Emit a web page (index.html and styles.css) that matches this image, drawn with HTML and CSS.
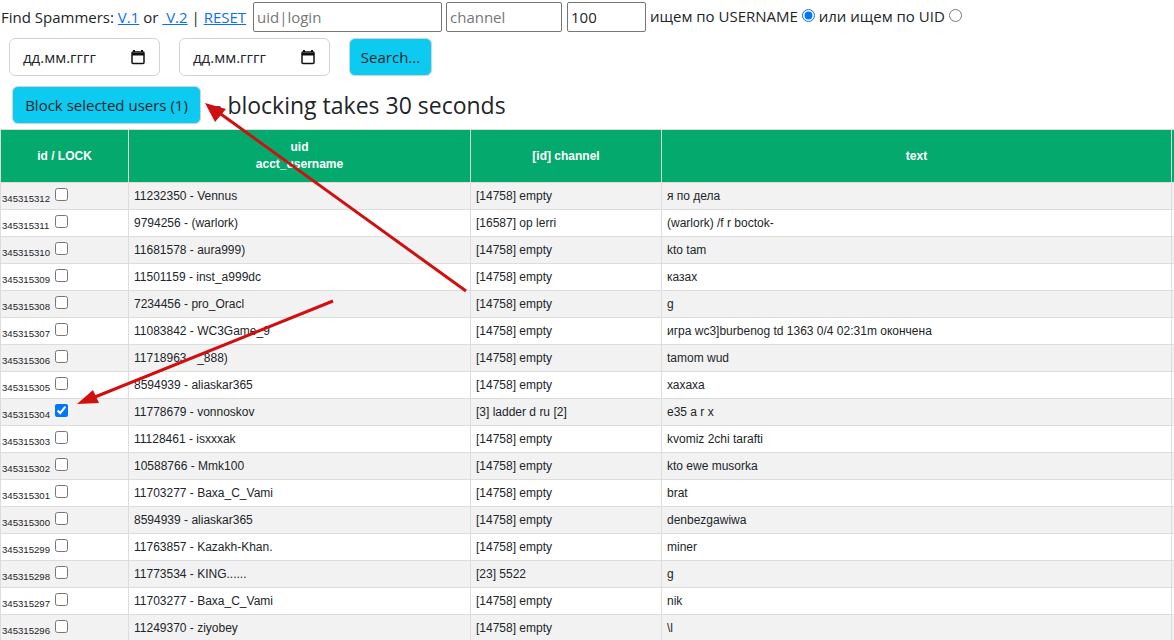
FILE: index.html
```html
<!DOCTYPE html>
<html lang="en">
<head>
  <meta charset="UTF-8">
  <title>Find Spammers</title>
  <link rel="stylesheet" href="styles.css">
</head>
<body>

    <!-- Search form -->
    <form class="filter-line">
        <span class="filter-title">Find Spammers: <a href="#">V.1</a> or <a href="#">&nbsp;V.2</a> | <a href="#">RESET</a></span>
        <input type="text" class="field field-login" placeholder="uid|login">
        <input type="text" class="field field-channel" placeholder="channel">
        <input type="text" class="field field-limit" value="100">
        <span class="filter-radio">ищем по USERNAME <input type="radio" name="mode" checked> или ищем по UID <input type="radio" name="mode"></span>
    </form>

    <div class="date-line">
        <div class="date-box">
            <span>дд.мм.гггг</span>
            <svg width="16" height="16" viewBox="0 0 16 16"><path d="M4 1v2M12 1v2" stroke="#111" stroke-width="2" fill="none"/><rect x="2" y="3" width="12" height="11.500" rx="1" stroke="#111" stroke-width="1.500" fill="none"/><path d="M2 4h12v2.500H2z" fill="#111"/></svg>
        </div>
        <div class="date-box">
            <span>дд.мм.гггг</span>
            <svg width="16" height="16" viewBox="0 0 16 16"><path d="M4 1v2M12 1v2" stroke="#111" stroke-width="2" fill="none"/><rect x="2" y="3" width="12" height="11.500" rx="1" stroke="#111" stroke-width="1.500" fill="none"/><path d="M2 4h12v2.500H2z" fill="#111"/></svg>
        </div>
        <button type="button" class="btn-info btn-search">Search...</button>
    </div>

    <div class="block-line">
        <button type="button" class="btn-info btn-block">Block selected users (1)</button>
        <span class="block-note">- blocking takes 30 seconds</span>
    </div>

    <!-- Table -->
    <div class="table-wrap">
        <table>
            <colgroup>
                <col class="col-id"><col class="col-uid"><col class="col-channel"><col class="col-text"><col class="col-more">
            </colgroup>
            <thead>
                <tr>
                    <th>id / LOCK</th>
                    <th>uid<br>acct_username</th>
                    <th>[id] channel</th>
                    <th>text</th>
                    <th></th>
                </tr>
            </thead>
            <tbody>
                <tr><td class="cell-id"><small>345315312</small> <input type="checkbox"></td><td>11232350 - Vennus</td><td>[14758] empty</td><td>я по дела</td><td></td></tr>
                <tr><td class="cell-id"><small>345315311</small> <input type="checkbox"></td><td>9794256 - (warlork)</td><td>[16587] op lerri</td><td>(warlork) /f r boctok-</td><td></td></tr>
                <tr><td class="cell-id"><small>345315310</small> <input type="checkbox"></td><td>11681578 - aura999)</td><td>[14758] empty</td><td>kto tam</td><td></td></tr>
                <tr><td class="cell-id"><small>345315309</small> <input type="checkbox"></td><td>11501159 - inst_a999dc</td><td>[14758] empty</td><td>казах</td><td></td></tr>
                <tr><td class="cell-id"><small>345315308</small> <input type="checkbox"></td><td>7234456 - pro_Oracl</td><td>[14758] empty</td><td>g</td><td></td></tr>
                <tr><td class="cell-id"><small>345315307</small> <input type="checkbox"></td><td>11083842 - WC3Game_9</td><td>[14758] empty</td><td>игра wc3]burbenog td 1363 0/4 02:31m окончена</td><td></td></tr>
                <tr><td class="cell-id"><small>345315306</small> <input type="checkbox"></td><td>11718963 - _888)</td><td>[14758] empty</td><td>tamom wud</td><td></td></tr>
                <tr><td class="cell-id"><small>345315305</small> <input type="checkbox"></td><td>8594939 - aliaskar365</td><td>[14758] empty</td><td>хахаха</td><td></td></tr>
                <tr><td class="cell-id"><small>345315304</small> <input type="checkbox" checked></td><td>11778679 - vonnoskov</td><td>[3] ladder d ru [2]</td><td>е35 а r х</td><td></td></tr>
                <tr><td class="cell-id"><small>345315303</small> <input type="checkbox"></td><td>11128461 - isxxxak</td><td>[14758] empty</td><td>kvomiz 2chi tarafti</td><td></td></tr>
                <tr><td class="cell-id"><small>345315302</small> <input type="checkbox"></td><td>10588766 - Mmk100</td><td>[14758] empty</td><td>kto ewe musorka</td><td></td></tr>
                <tr><td class="cell-id"><small>345315301</small> <input type="checkbox"></td><td>11703277 - Baxa_C_Vami</td><td>[14758] empty</td><td>brat</td><td></td></tr>
                <tr><td class="cell-id"><small>345315300</small> <input type="checkbox"></td><td>8594939 - aliaskar365</td><td>[14758] empty</td><td>denbezgawiwa</td><td></td></tr>
                <tr><td class="cell-id"><small>345315299</small> <input type="checkbox"></td><td>11763857 - Kazakh-Khan.</td><td>[14758] empty</td><td>miner</td><td></td></tr>
                <tr><td class="cell-id"><small>345315298</small> <input type="checkbox"></td><td>11773534 - KING......</td><td>[23] 5522</td><td>g</td><td></td></tr>
                <tr><td class="cell-id"><small>345315297</small> <input type="checkbox"></td><td>11703277 - Baxa_C_Vami</td><td>[14758] empty</td><td>nik</td><td></td></tr>
                <tr><td class="cell-id"><small>345315296</small> <input type="checkbox"></td><td>11249370 - ziyobey</td><td>[14758] empty</td><td>\l</td><td></td></tr>
            </tbody>
        </table>
    </div>

    <!-- Red arrows drawn over the page -->
    <svg class="arrows" width="1174" height="640" viewBox="0 0 1174 640">
        <path d="M466 291L218 112" stroke="#d01010" stroke-width="3" fill="none"/>
        <path d="M205 103L226 109L215 122z" fill="#d01010"/>
        <path d="M333 301L90 399" stroke="#d01010" stroke-width="3" fill="none"/>
        <path d="M77 404L93 390L99 403z" fill="#d01010"/>
    </svg>

</body>
</html>
```

FILE: styles.css
```css
body {
  margin: 0;
  font-family: "Open Sans", "Noto Sans", sans-serif;
  font-size: 15px;
  color: #212529;
  background-color: #fff;
  overflow: hidden;
}

a {
  color: #0d6efd;
}

/* First line */
.filter-line {
  display: flex;
  align-items: center;
  height: 32px;
  padding-top: 2px;
  box-sizing: border-box;
  white-space: nowrap;
}

.filter-title {
  width: 253px;
  padding-left: 1px;
  box-sizing: border-box;
}

.field {
  height: 30px;
  box-sizing: border-box;
  border: 1px solid #767676;
  border-radius: 2px;
  padding: 1px 3px;
  font-family: inherit;
  font-size: 15px;
  color: #212529;
}

.field::placeholder {
  color: #777;
}

.field-login {
  width: 189px;
}

.field-channel {
  width: 116px;
  margin-left: 4px;
}

.field-limit {
  width: 79px;
  margin-left: 5px;
}

.filter-radio {
  margin-left: 4px;
  position: relative;
  top: -1px;
}

.filter-radio input {
  margin: 0;
}

/* Dates and search */
.date-line {
  display: flex;
  gap: 19px;
  height: 38px;
  margin-top: 6px;
  padding-left: 9px;
}

.date-box {
  display: flex;
  align-items: center;
  justify-content: space-between;
  width: 151px;
  box-sizing: border-box;
  padding: 0 13px;
  border: 1px solid #ced4da;
  border-radius: 6px;
}

.btn-info {
  background-color: #0dcaf0;
  border: 1px solid #ced4da;
  border-radius: 6px;
  color: #212529;
  font-family: inherit;
  font-size: 15px;
  padding: 0;
}

.btn-search {
  width: 83px;
}

/* Block button */
.block-line {
  display: flex;
  align-items: center;
  height: 38px;
  margin-top: 10px;
  padding-left: 12px;
}

.btn-block {
  width: 189px;
  height: 38px;
}

.block-note {
  margin-left: 13px;
  font-size: 23px;
}

/* Table */
.table-wrap {
  margin-top: 5px;
  overflow: hidden;
}

table {
  border-collapse: collapse;
  table-layout: fixed;
  width: 1260px;
  font-family: "Liberation Sans", Arial, sans-serif;
  font-size: 12px;
}

.col-id { width: 128px; }
.col-uid { width: 342px; }
.col-channel { width: 191px; }
.col-text { width: 510px; }
.col-more { width: 89px; }

th, td {
  border: 1px solid #ddd;
  padding: 0 5px;
  text-align: left;
}

th {
  height: 52px;
  background-color: #04aa6d;
  color: #fff;
  text-align: center;
  line-height: 17px;
}

td {
  height: 26px;
}

tbody tr:nth-child(odd) {
  background-color: #f2f2f2;
}

.cell-id {
  padding-left: 1px;
  padding-right: 0;
}

.cell-id small {
  font-size: 9.600px;
}

.cell-id input {
  margin: 0 0 0 2px;
  vertical-align: 1px;
}

/* Arrows */
.arrows {
  position: absolute;
  top: 0;
  left: 0;
  pointer-events: none;
}
```
